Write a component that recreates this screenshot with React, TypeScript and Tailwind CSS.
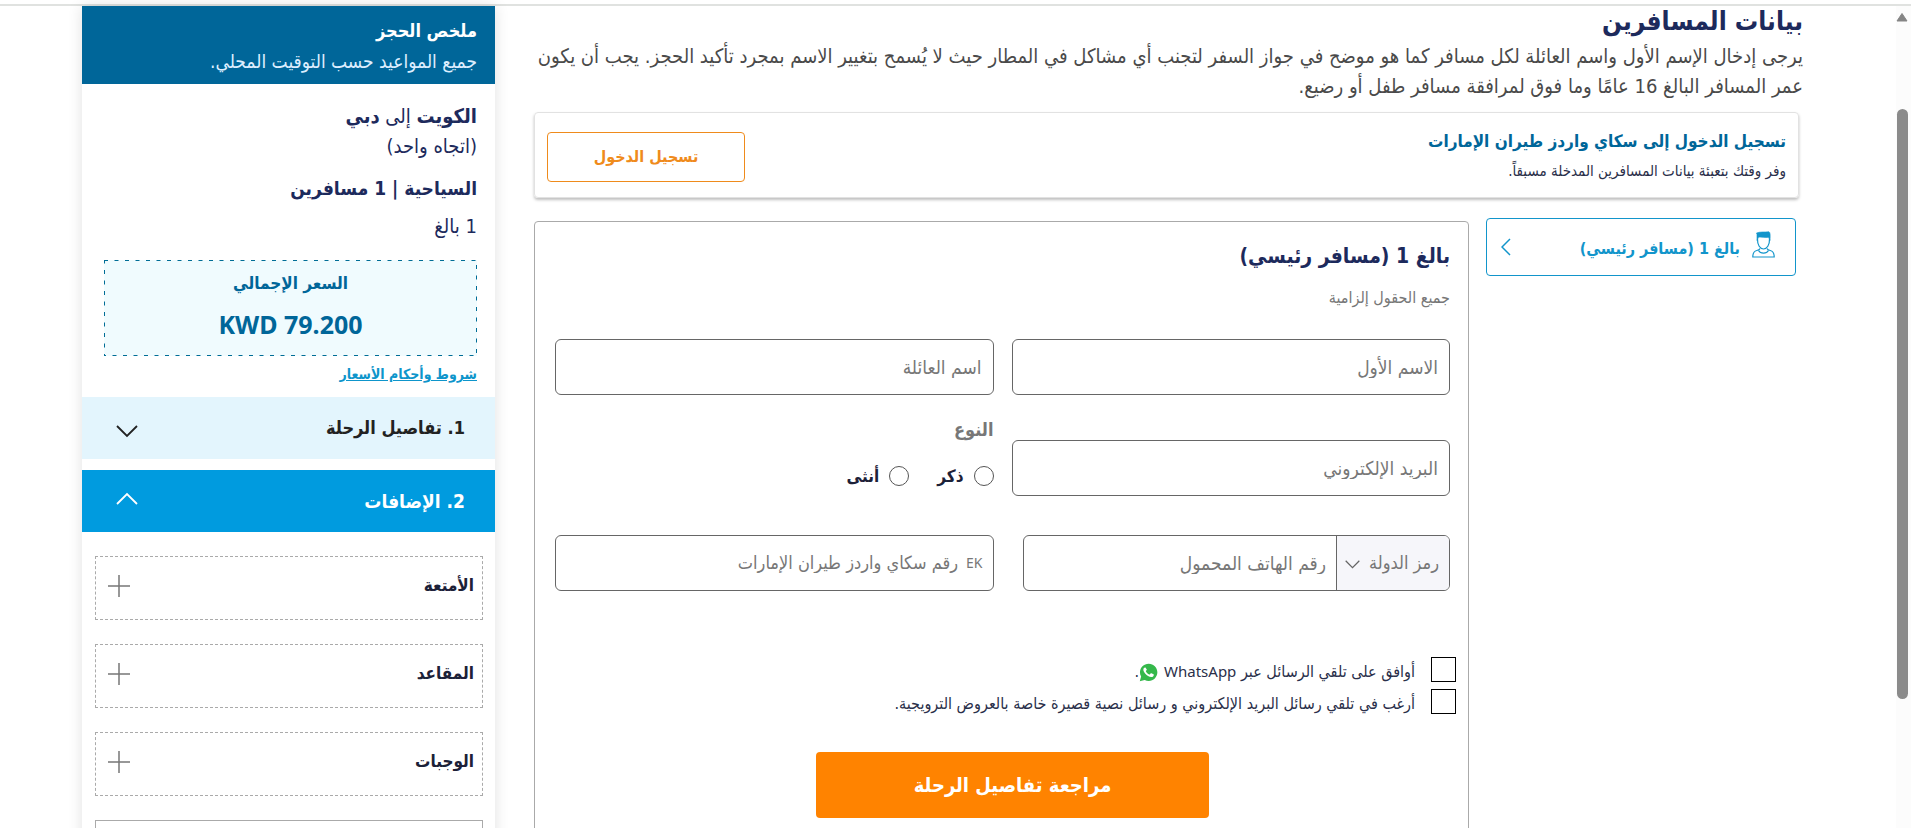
import clsx from 'clsx'

interface TextFieldProps {
  label: string
  type?: string
  className?: string
}

const extras = ['الأمتعة', 'المقاعد', 'الوجبات']

function Chevron({ className }: Readonly<{ className?: string }>) {
  return (
    <svg viewBox="0 0 22 13" fill="none" stroke="currentColor" className={className} aria-hidden="true">
      <path d="M1 1l10 10L21 1" strokeWidth="1.8" />
    </svg>
  )
}

function PassengerIcon() {
  return (
    <svg viewBox="0 0 23 27" fill="none" stroke="currentColor" className="-mt-1.5 h-[27px] w-[23px]" aria-hidden="true">
      <path d="M5 9.500V3.500L4.500 2C8 .6 12 1.200 17 .8c1.300 1 1.300 3 1 8.700L16.500 6.200C13 7 9.500 5.800 6.500 6.200z" fill="currentColor" strokeWidth="0.6" />
      <path d="M5.500 8c-.2 6 2.600 10 6 10s6.200-4 6-10" strokeWidth="1.2" />
      <path d="M8 17.500c-.4 1.300-1.300 1.700-3.200 2C2 20 .8 21.500.8 26h21.400c0-4.500-1.200-6-4-6.500-1.900-.3-2.800-.7-3.200-2" strokeWidth="1.2" />
      <path d="M6.500 19.500c1 1.800 3 2.700 5 2.700s4-.9 5-2.700" strokeWidth="1.2" />
    </svg>
  )
}

function WhatsAppIcon() {
  return (
    <svg viewBox="0 0 24 24" className="ms-1.5 inline-block size-[19px]" aria-hidden="true">
      <path
        fill="#35b84b"
        d="M12.300.8C6 .8 1.200 5.700 1.200 11.700c0 2 .5 3.800 1.500 5.400L1 23.200l6.200-1.600a11 11 0 0 0 5.100 1.200c6 0 10.900-5 10.900-11S18.300.8 12.300.8z"
      />
      <path
        fill="#fff"
        d="M8.600 6.200c-.3-.6-.6-.6-.9-.6-1 0-2.200 1.100-2.200 3 0 1.800 1.200 3.400 2.500 4.900 2 2.200 4.600 4.200 7.600 4.200 1.700 0 3-1.200 3.100-2.700 0-.4-.1-.6-.4-.8l-2.600-1.300c-.4-.2-.7-.1-.9.2l-1.100 1.300c-.3.3-.5.3-.8.1-1.900-.8-3.200-2.200-4.100-3.800-.2-.3-.1-.5.1-.8l.8-1c.2-.3.2-.5.1-.8z"
      />
    </svg>
  )
}

function TextField({ label, type = 'text', className }: Readonly<TextFieldProps>) {
  return (
    <input
      type={type}
      aria-label={label}
      placeholder={label}
      dir="rtl"
      className={clsx(
        'h-14 w-full rounded-md border border-[#666] bg-white px-[11px] text-[19px] text-[#222] placeholder:text-[#777] placeholder:opacity-100',
        className,
      )}
    />
  )
}

function BookingSummary() {
  return (
    <aside className="w-[413px] shrink-0 bg-white shadow-[0_0_14px_rgba(0,0,0,0.12)]">
      <header className="bg-[#006699] pt-[9px] pb-[7px] ps-[18px] pe-5 leading-[31px] text-white">
        <h2 className="text-lg leading-[31px] font-bold">ملخص الحجز</h2>
        <p className="text-[19px] leading-[31px] text-[#def]">جميع المواعيد حسب التوقيت المحلي.</p>
      </header>

      <div className="ps-[18px] pe-[22px] pt-[17px] text-xl leading-[30px] text-[#1d2a5c]">
        <p>
          <b>الكويت</b> إلى <b>دبي</b>
        </p>
        <p>(اتجاه واحد)</p>
        <p className="mt-3 text-[19px] leading-[30px] font-bold">السياحية | 1 مسافرين</p>
        <p className="mt-2">1 بالغ</p>

        <div className="relative mt-[19px] h-24 bg-[#f0fbfe] pt-[9px] text-center font-bold text-[#006699]">
          <svg className="absolute inset-0 size-full" aria-hidden="true">
            <rect width="100%" height="100%" fill="none" stroke="#006d96" strokeWidth="2" strokeDasharray="4 6.500" />
          </svg>
          <p className="text-[17px] leading-7">السعر الإجمالي</p>
          <p dir="ltr" className="mt-[9px] font-['Noto_Sans'] text-[25px] leading-9">
            KWD 79.200
          </p>
        </div>

        <a href="#fare-rules" className="mt-1.5 block text-sm leading-6 font-bold text-[#0e95cb] underline">
          شروط وأحكام الأسعار
        </a>
      </div>

      <button className="mt-[11px] flex h-[62px] w-full items-center justify-between bg-[#e3f5fd] ps-[30px] pe-[34px] text-lg font-bold text-[#222]">
        1. تفاصيل الرحلة
        <Chevron className="mt-1.5 h-[13px] w-[22px]" />
      </button>
      <button className="mt-[11px] flex h-[62px] w-full items-center justify-between bg-[#009bdf] ps-[30px] pe-[34px] text-[19px] font-bold text-white">
        2. الإضافات
        <Chevron className="mb-1.5 h-[13px] w-[22px] rotate-180" />
      </button>

      <div className="mt-6 flex flex-col gap-6 ps-3 pe-[13px]">
        {extras.map((extra) => (
          <button
            key={extra}
            className="flex h-16 items-center justify-between border border-dashed border-[#aaa] ps-2 pe-3 pb-1 text-[17px] font-bold text-[#1c2138]"
          >
            {extra}
            <svg viewBox="0 0 22 22" stroke="#777" className="size-[22px]" aria-hidden="true">
              <path d="M11 0v22M0 11h22" strokeWidth="1.5" />
            </svg>
          </button>
        ))}
        <div className="h-16 border border-[#aaa]" />
      </div>
    </aside>
  )
}

function PassengerForm() {
  return (
    <form className="mt-[3px] flex-1 rounded-sm border border-[#aaa] ps-[18px] pe-5 pt-4 pb-8">
      <h2 className="text-[21px] leading-9 font-bold text-[#1d2a5c]">بالغ 1 (مسافر رئيسي)</h2>
      <p className="mt-3 text-base leading-6 text-[#777]">جميع الحقول إلزامية</p>

      <div className="mt-[29px] grid grid-cols-2 gap-x-[18px]">
        <TextField label="الاسم الأول" />
        <TextField label="اسم العائلة" />
      </div>

      <div className="mt-[23px] grid grid-cols-2 items-end gap-x-[18px]">
        <TextField label="البريد الإلكتروني" type="email" />
        <fieldset className="h-[78px]">
          <legend className="text-lg leading-6 font-bold text-[#777]">النوع</legend>
          <div className="mt-[22px] flex gap-7 text-[17px] leading-6 font-bold text-[#1c2138]">
            {['ذكر', 'أنثى'].map((gender) => (
              <label key={gender} className="flex items-center gap-2.5">
                <input
                  type="radio"
                  name="gender"
                  className="size-5 appearance-none rounded-full border border-[#555] bg-white checked:bg-[#1d2a5c]"
                />
                {gender}
              </label>
            ))}
          </div>
        </fieldset>
      </div>

      <div className="mt-[39px] grid grid-cols-2 gap-x-[18px]">
        <div className="me-[11px] flex h-14 overflow-hidden rounded-md border border-[#666]">
          <div className="relative w-[113px] shrink-0 border-e border-[#666] bg-[#f6f6fa]">
            <select
              aria-label="رمز الدولة"
              className="h-full w-full appearance-none bg-transparent ps-2.5 text-lg text-[#777]"
            >
              <option>رمز الدولة</option>
            </select>
            <Chevron className="pointer-events-none absolute end-2 top-6 h-[9px] w-[15px] text-[#666]" />
          </div>
          <input
            type="tel"
            aria-label="رقم الهاتف المحمول"
            placeholder="رقم الهاتف المحمول"
            dir="rtl"
            className="min-w-0 flex-1 px-2.5 text-[19px] placeholder:text-[#777] placeholder:opacity-100"
          />
        </div>
        <label className="flex h-14 items-center gap-2 rounded-md border border-[#666] px-2.5 text-lg text-[#777]">
          <span className="font-['Noto_Sans'] text-sm">EK</span>
          <input
            aria-label="رقم سكاي واردز طيران الإمارات"
            placeholder="رقم سكاي واردز طيران الإمارات"
            className="min-w-0 flex-1 placeholder:text-[#777] placeholder:opacity-100"
          />
        </label>
      </div>

      <div className="-ms-1.5 mt-[66px] flex flex-col gap-[7px] text-base leading-[25px] text-[#2a2f4a]">
        <label className="flex h-[25px] gap-4">
          <input
            type="checkbox"
            className="size-[25px] appearance-none border border-black bg-white checked:bg-[#1d2a5c]"
          />
          <span className="pt-0.5">
            أوافق على تلقي الرسائل عبر <span className="font-['Noto_Sans'] text-[15px]">WhatsApp</span>
            <WhatsAppIcon />.
          </span>
        </label>
        <label className="flex h-[25px] gap-4">
          <input
            type="checkbox"
            className="size-[25px] appearance-none border border-black bg-white checked:bg-[#1d2a5c]"
          />
          <span className="pt-0.5">
            أرغب في تلقي رسائل البريد الإلكتروني و رسائل نصية قصيرة خاصة بالعروض الترويجية.
          </span>
        </label>
      </div>

      <div className="mt-[38px] flex justify-center pe-5">
        <button type="button" className="h-[66px] w-[393px] rounded bg-[#ff8300] text-xl font-bold text-white">
          مراجعة تفاصيل الرحلة
        </button>
      </div>
    </form>
  )
}

export default function App() {
  return (
    <div
      dir="rtl"
      className="flex h-screen flex-col overflow-hidden bg-white pt-1 font-['DejaVu_Sans_Condensed','DejaVu_Sans',sans-serif]"
    >
      <div className="h-0.5 shrink-0 bg-[#e0e2e0]" />

      <div className="flex min-h-0 flex-1">
        <div className="w-[15px] shrink-0 bg-[#fcfcfc]" aria-hidden="true">
          <svg viewBox="0 0 12 10" className="ms-[3px] mt-1.5 h-2.5 w-3">
            <path d="M6 1.500L11 9H1z" fill="#858585" stroke="#858585" strokeLinejoin="round" />
          </svg>
          <div className="ms-[3px] mt-[87px] h-[590px] w-[11px] rounded-full bg-[#8b8b8b]" />
        </div>

        <div className="flex flex-1 items-start gap-[39px] ps-[93px] pe-[82px]">
          <main className="min-w-0 flex-1">
            <h1 className="text-[26px] leading-[30px] font-bold text-[#1d2a5c]">بيانات المسافرين</h1>
            <p className="mt-[5px] text-xl leading-[30px] text-[#4a4a4a]">
              يرجى إدخال الإسم الأول واسم العائلة لكل مسافر كما هو موضح في جواز السفر لتجنب أي مشاكل في المطار حيث لا
              يُسمح بتغيير الاسم بمجرد تأكيد الحجز. يجب أن يكون عمر المسافر البالغ 16 عامًا وما فوق لمرافقة مسافر طفل أو
              رضيع.
            </p>

            <section className="ms-1 mt-[11px] flex h-[86px] items-start justify-between rounded-sm border border-[#e2e2e2] ps-3 pe-3 shadow-[0_2px_3px_rgba(0,0,0,0.25)]">
              <div>
                <h2 className="mt-3 text-[17px] leading-8 font-bold text-[#006699]">
                  تسجيل الدخول إلى سكاي واردز طيران الإمارات
                </h2>
                <p className="mt-0.5 text-[15px] leading-6 text-[#2a2f4a]">
                  وفر وقتك بتعبئة بيانات المسافرين المدخلة مسبقاً.
                </p>
              </div>
              <button className="mt-[19px] h-[50px] w-[198px] rounded-sm border border-[#ef8b1c] text-base font-bold text-[#ef8b1c]">
                تسجيل الدخول
              </button>
            </section>

            <div className="mt-5 flex items-start gap-[17px] ps-[7px]">
              <button className="flex h-[58px] w-[310px] shrink-0 items-center rounded-sm border border-[#1295cb] ps-5 pe-3.5 text-base font-bold text-[#1295cb]">
                <PassengerIcon />
                <span className="ms-3 flex-1 pt-1 text-start">بالغ 1 (مسافر رئيسي)</span>
                <svg viewBox="0 0 10 18" fill="none" stroke="currentColor" className="h-[18px] w-2.5" aria-hidden="true">
                  <path d="M9 1L1 9l8 8" strokeWidth="1.500" />
                </svg>
              </button>
              <PassengerForm />
            </div>
          </main>

          <BookingSummary />
        </div>
      </div>
    </div>
  )
}
